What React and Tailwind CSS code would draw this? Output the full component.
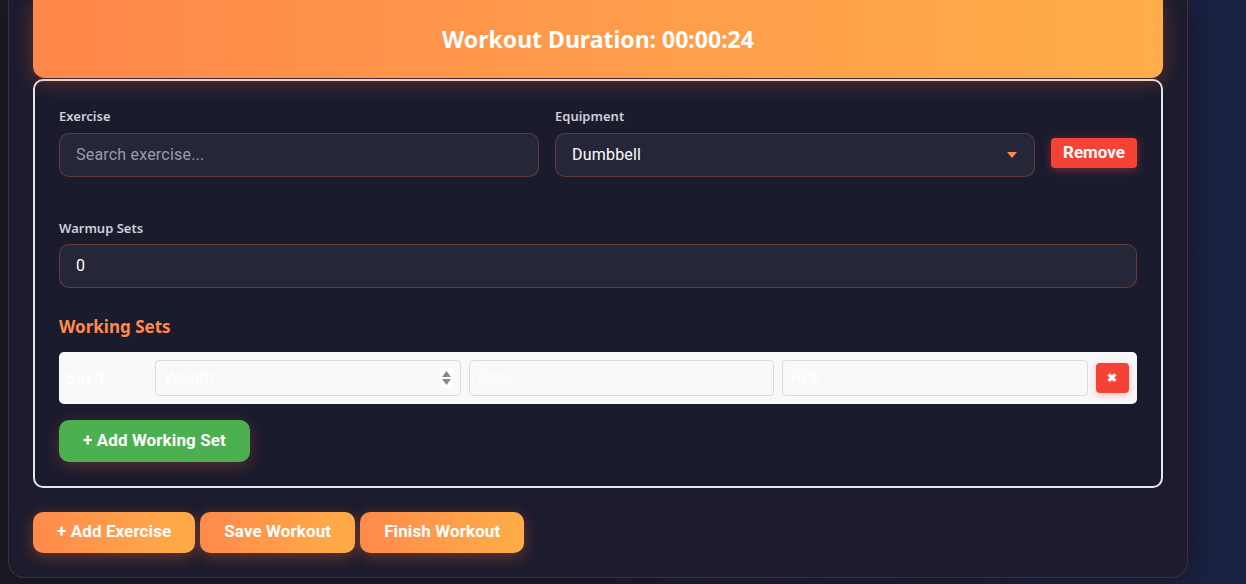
import React from 'react';

const field =
  "w-full h-[44px] rounded-[10px] bg-[#252637] border border-[#ff6b35]/30 px-4 text-[16px] text-white font-['Roboto',sans-serif] tracking-[0.2px] outline-none placeholder:text-[#9b9ba8]";

const label = "block pt-[2px] mb-[6px] text-[13px] font-semibold text-[#cfcfd6] font-['Noto_Sans',sans-serif]";

const orangeBtn =
  "h-[41px] px-6 rounded-[10px] bg-gradient-to-r from-[#ff8a4c] to-[#ffad48] text-white font-bold text-[17px] tracking-[0.1px] shadow-[0_4px_15px_rgba(255,107,53,0.35)]";

const setInput =
  "w-full h-[36px] rounded-[4px] border border-[#dcdcdc] bg-[#f8f9fa] px-2 text-[16px] placeholder:text-white";

const SetRow = () => (
  <div className="grid grid-cols-[80px_1fr_1fr_1fr_auto] gap-2 items-center p-2 bg-[#f8f9fa] rounded-[5px]">
    <span className="text-white font-bold text-[16px] font-['Noto_Sans',sans-serif]">Set 1</span>
    <div className="relative">
      <input placeholder="Weight" className={setInput} />
      <div className="absolute right-[8px] top-[8px] w-[13px] h-[20px] bg-white flex flex-col items-center justify-center gap-[2px]">
        <svg width="9" height="6" viewBox="0 0 9 6"><path d="M4.5 0L9 6H0z" fill="#8a8a8a" /></svg>
        <svg width="9" height="6" viewBox="0 0 9 6"><path d="M0 0h9L4.5 6z" fill="#8a8a8a" /></svg>
      </div>
    </div>
    <input placeholder="Reps" className={setInput} />
    <input placeholder="RPE" className={setInput} />
    <button className="w-[33px] h-[30px] rounded-[4px] bg-[#f44336] text-white font-bold text-[12px] leading-none flex items-center justify-center shadow-[0_2px_8px_rgba(244,67,54,0.3)]">
      ✖
    </button>
  </div>
);

export default function App() {
  return (
    <div className="h-[584px] overflow-hidden bg-gradient-to-r from-[#1c1a24] via-[#1b1b2d] to-[#1a2142] font-['Roboto',sans-serif]">
      <div className="ml-[8px] w-[1180px] rounded-b-[16px] border border-t-0 border-[#ff6b35]/20 bg-[#1c1c2e] px-6 pb-6 shadow-[0_0_30px_rgba(0,0,0,0.3)]">
        {/* duration header */}
        <div className="relative z-10 h-[78px] rounded-b-[12px] bg-gradient-to-r from-[#ff874b] to-[#ffae4a] flex items-center justify-center shadow-[0_4px_20px_rgba(255,107,53,0.3)]">
          <h2 className="text-white font-bold text-[23px] font-['Noto_Sans',sans-serif]">Workout Duration: 00:00:24</h2>
        </div>

        {/* exercise card */}
        <div className="mt-px rounded-[10px] border-2 border-[#e6e6e6] bg-[#1b1b2e] p-6">
          <div className="flex items-end gap-4">
            <div className="w-[480px]">
              <label className={label}>Exercise</label>
              <input placeholder="Search exercise..." className={field} />
            </div>
            <div className="w-[480px]">
              <label className={label}>Equipment</label>
              <div className="relative">
                <div className={field + ' flex items-center'}>Dumbbell</div>
                <svg className="absolute right-[18px] top-[19px]" width="10" height="6" viewBox="0 0 10 6">
                  <path d="M0 0h10L5 6z" fill="#ff8a4c" />
                </svg>
              </div>
            </div>
            <button className="mb-[9px] h-[30px] px-3 rounded-[4px] bg-[#f44336] text-white font-bold text-[17px] shadow-[0_2px_10px_rgba(244,67,54,0.4)]">
              Remove
            </button>
          </div>

          <div className="mt-[40px]">
            <label className={label}>Warmup Sets</label>
            <div className={field + ' flex items-center'}>0</div>
          </div>

          <h3 className="mt-[26px] mb-[12px] text-[17px] font-bold text-[#ff8a4c] font-['Noto_Sans',sans-serif]">
            Working Sets
          </h3>

          <SetRow />

          <button className="mt-4 h-[42px] px-6 rounded-[10px] bg-[#4caf50] text-white font-bold text-[17px] tracking-[0.1px] shadow-[0_4px_15px_rgba(255,107,53,0.25)]">
            + Add Working Set
          </button>
        </div>

        <div className="mt-6 flex gap-[5px]">
          <button className={orangeBtn}>+ Add Exercise</button>
          <button className={orangeBtn}>Save Workout</button>
          <button className={orangeBtn}>Finish Workout</button>
        </div>
      </div>
    </div>
  );
}
